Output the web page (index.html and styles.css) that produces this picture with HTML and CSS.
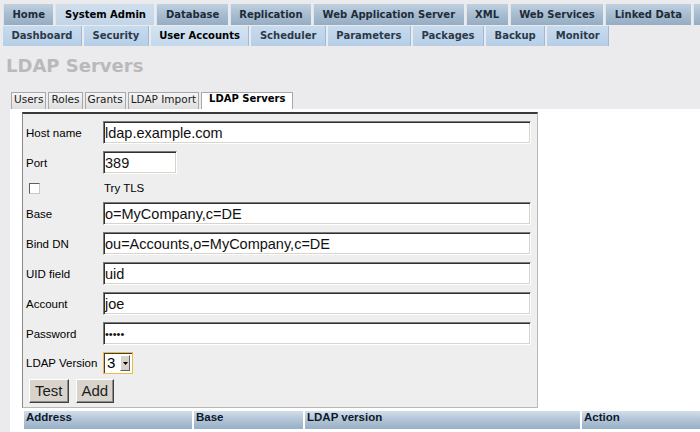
FILE: index.html
```html
<!DOCTYPE html>
<html>
<head>
<meta charset="utf-8">
<link rel="stylesheet" href="styles.css">
</head>
<body>
<div class="nav">
  <div class="navrow r1">
    <span class="t">Home</span>
    <span class="t on">System Admin</span>
    <span class="t">Database</span>
    <span class="t">Replication</span>
    <span class="t">Web Application Server</span>
    <span class="t">XML</span>
    <span class="t">Web Services</span>
    <span class="t">Linked Data</span>
    <span class="t empty"></span>
  </div>
  <div class="navrow r2">
    <span class="t">Dashboard</span>
    <span class="t">Security</span>
    <span class="t on">User Accounts</span>
    <span class="t">Scheduler</span>
    <span class="t">Parameters</span>
    <span class="t">Packages</span>
    <span class="t">Backup</span>
    <span class="t">Monitor</span>
  </div>
</div>
<h1 class="title">LDAP Servers</h1>
<div class="subtabs">
  <span class="st">Users</span>
  <span class="st">Roles</span>
  <span class="st">Grants</span>
  <span class="st">LDAP Import</span>
  <span class="st on">LDAP Servers</span>
</div>
<div class="content">
  <div class="panel">
    <div class="row"><span class="lbl">Host name</span><input class="field wide" type="text" value="ldap.example.com"></div>
    <div class="row"><span class="lbl">Port</span><input class="field port" type="text" value="389"></div>
    <div class="row tls"><span class="lbl"><span class="chk"></span></span><span class="tlstext">Try TLS</span></div>
    <div class="row"><span class="lbl">Base</span><input class="field wide" type="text" value="o=MyCompany,c=DE"></div>
    <div class="row"><span class="lbl">Bind DN</span><input class="field wide" type="text" value="ou=Accounts,o=MyCompany,c=DE"></div>
    <div class="row"><span class="lbl">UID field</span><input class="field wide" type="text" value="uid"></div>
    <div class="row"><span class="lbl">Account</span><input class="field wide" type="text" value="joe"></div>
    <div class="row"><span class="lbl">Password</span><input class="field wide pw" type="password" value="joejo"></div>
    <div class="row sel"><span class="lbl">LDAP Version</span><span class="select"><span class="selval">3</span><span class="selbtn"><svg width="5" height="3" viewBox="0 0 5 3"><path d="M0 0H5L2.5 3Z" fill="#000"/></svg></span></span></div>
    <div class="row btns"><span class="btn">Test</span><span class="btn">Add</span></div>
  </div>
  <div class="thead">
    <span class="th">Address</span>
    <span class="th">Base</span>
    <span class="th">LDAP version</span>
    <span class="th">Action</span>
  </div>
</div>
</body>
</html>
```
FILE: styles.css
```css
html, body {
  margin: 0;
  padding: 0;
}
body {
  background: #ebebee;
  width: 700px;
  height: 432px;
  overflow: hidden;
  font-family: "Liberation Sans", Arial, sans-serif;
}
.nav {
  padding: 3px 0 0 3px;
  display: flex;
  flex-direction: column;
  gap: 1px;
}
.navrow {
  display: flex;
  gap: 2px;
  white-space: nowrap;
}
.t {
  font: bold 10px "DejaVu Sans", Verdana, sans-serif;
  padding: 0 8.5px;
  flex: none;
}
.r1 .t {
  height: 21px;
  line-height: 21px;
  margin-top: 1px;
  background: linear-gradient(#bfd0e0, #a3b9cd 60%, #95adc4);
  color: #1e2c3a;
  border-left: 1px solid #dde6ee;
}
.r1 .t.empty {
  width: 20px;
}
.r1 .t.on {
  background: linear-gradient(#cfdeec, #c2d5e8);
  color: #000;
}
.r2 .t {
  height: 20px;
  line-height: 20px;
  background: linear-gradient(#c8dbee, #b6cee6);
  color: #2b3a4a;
  border-right: 1px solid #9fbad6;
}
.r2 .t.on {
  background: linear-gradient(#d3e3f2, #c4d8ec);
  color: #000;
}
.title {
  margin: 8px 0 0 6px;
  font: bold 18px/24px "DejaVu Sans", Verdana, sans-serif;
  color: #b9b9bc;
}
.subtabs {
  display: flex;
  gap: 2px;
  margin: 14px 0 0 11px;
  height: 17px;
  align-items: flex-end;
}
.st {
  height: 16px;
  line-height: 16px;
  padding: 0 2px;
  border: 1px solid #a8a8a8;
  border-bottom: none;
  background: linear-gradient(#f5f5f5, #dedede);
  font: 10.5px "DejaVu Sans", Verdana, sans-serif;
  color: #1a1a1a;
}
.st.on {
  background: #fff;
  font-weight: bold;
  font-size: 10px;
  padding: 0 7px;
  color: #000;
}
.content {
  background: #fff;
  margin-left: 10px;
  padding: 3px 0 0 12px;
  height: 330px;
}
.panel {
  width: 516px;
  box-sizing: border-box;
  background: #eeeeee;
  border-top: 2px solid #3a3a3a;
  border-left: 1px solid #8a8a8a;
  border-right: 1px solid #b8b8b8;
  border-bottom: 1px solid #b8b8b8;
  padding: 7px 0 4px 3px;
  display: flex;
  flex-direction: column;
  gap: 7px;
}
.row {
  display: flex;
  align-items: center;
  height: 23px;
}
.row.tls {
  height: 14px;
}
.row.sel {
  height: 22px;
  margin-bottom: -2px;
}
.row.btns {
  height: 24px;
  gap: 7px;
  padding-left: 3px;
}
.lbl {
  width: 77px;
  flex: none;
  font-size: 11.5px;
  color: #000;
  display: flex;
  align-items: center;
}
.tlstext {
  font-size: 11.5px;
  color: #000;
  padding-left: 1px;
}
.chk {
  display: inline-block;
  width: 11px;
  height: 11px;
  box-sizing: border-box;
  margin: 0 0 0 3px;
  background: #fff;
  border-top: 1px solid #606060;
  border-left: 1px solid #606060;
  border-right: 1px solid #c8c8c8;
  border-bottom: 1px solid #c8c8c8;
}
.field {
  height: 23px;
  box-sizing: border-box;
  margin: 0;
  padding: 0 1px;
  background: #fff;
  border: 1px solid;
  border-color: #7a7a7a #ffffff #ffffff #7a7a7a;
  box-shadow: inset 1px 1px 0 #303030, inset -1px -1px 0 #d8d4cc;
  font: 14.5px "Liberation Sans", Arial, sans-serif;
  color: #111;
  outline: none;
}
.field.wide {
  width: 428px;
}
.field.port {
  width: 74px;
}
.field.pw {
  font-size: 11px;
  letter-spacing: 0;
}
.select {
  display: flex;
  align-items: center;
  width: 30px;
  height: 22px;
  box-sizing: border-box;
  border: 1px solid #f0b848;
  box-shadow: inset 1px 1px 0 #404040;
  background: #fff;
  padding: 2px 2px 2px 3px;
}
.selval {
  font-size: 15px;
  flex: 1;
  line-height: 16px;
}
.selbtn {
  width: 10px;
  height: 16px;
  box-sizing: border-box;
  background: #d8d4cc;
  border-top: 1px solid #fff;
  border-left: 1px solid #fff;
  border-right: 1px solid #606060;
  border-bottom: 1px solid #606060;
  display: flex;
  align-items: center;
  justify-content: center;
}
.btn {
  height: 24px;
  box-sizing: border-box;
  padding: 0 5px;
  background: #d8d4cc;
  border-top: 1px solid #ffffff;
  border-left: 1px solid #ffffff;
  border-right: 1px solid #404040;
  border-bottom: 1px solid #404040;
  box-shadow: inset -1px -1px 0 #8c8c8c;
  font-size: 15px;
  line-height: 21px;
  color: #1c1c1c;
}
.thead {
  display: grid;
  grid-template-columns: 168px 109px 275px 140px;
  gap: 2px;
  margin: 3px 0 0 2px;
  width: 720px;
}
.th {
  height: 18px;
  line-height: 19px;
  padding-left: 2px;
  background: linear-gradient(#d2deea, #b4c6d8 45%, #98afc5);
  font: bold 11.5px "Liberation Sans", Arial, sans-serif;
  color: #0c1a2c;
}
```
